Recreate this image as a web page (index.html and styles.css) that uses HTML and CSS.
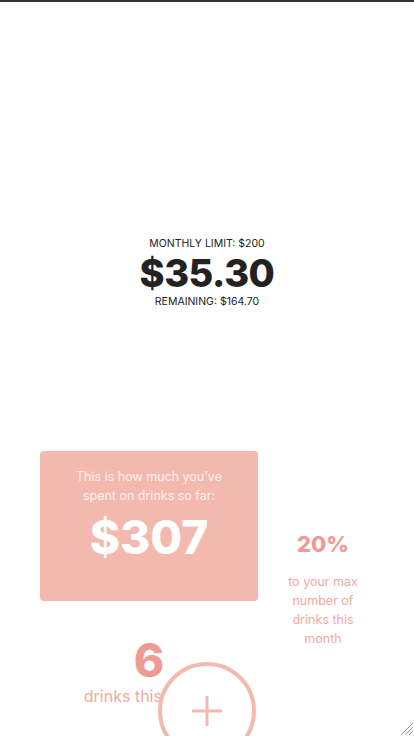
FILE: index.html
```html
<!DOCTYPE html>
<html>
<head>
<meta charset="utf-8">
<link rel="stylesheet" href="styles.css">
</head>
<body>
<div class="app">
  <section class="summary">
    <div class="limit">MONTHLY LIMIT: $200</div>
    <div class="spent">$35.30</div>
    <div class="remaining">REMAINING: $164.70</div>
  </section>
  <section class="stats">
    <div class="card">
      <p class="card-text">This is how much you’ve spent on drinks so far:</p>
      <div class="card-amount">$307</div>
    </div>
    <div class="side">
      <div class="pct">20%</div>
      <p class="side-text">to your max number of drinks this month</p>
    </div>
  </section>
  <section class="drinks">
    <div class="count">6</div>
    <div class="count-label">drinks this month</div>
  </section>
  <button class="add" aria-label="Add drink">
    <svg width="32" height="32" viewBox="0 0 32 32"><path d="M16 1v30M1 16h30" stroke="#f4b9ae" stroke-width="3" fill="none"/></svg>
  </button>
  <svg class="grip" width="16" height="16" viewBox="0 0 16 16"><path d="M15 3L3 15M15 7L7 15M15 11L11 15" stroke="#999" stroke-width="1" fill="none"/></svg>
</div>
</body>
</html>
```
FILE: styles.css
```css
html, body {
  margin: 0;
  padding: 0;
  background: #fff;
}
body {
  font-family: Inter, "Open Sans", sans-serif;
  border-top: 2px solid #333;
  height: 734px;
  overflow: hidden;
}
.app {
  position: relative;
  height: 734px;
}
.summary {
  height: 449px;
  display: flex;
  flex-direction: column;
  align-items: center;
  justify-content: center;
  color: #222;
  padding-top: 92px;
  box-sizing: border-box;
}
.limit, .remaining {
  font-size: 10.5px;
  line-height: 14px;
}
.spent {
  font-size: 38px;
  font-weight: 800;
  line-height: 44px;
  letter-spacing: -0.5px;
}
.stats {
  display: flex;
  align-items: flex-start;
  height: 150px;
  padding-left: 40px;
}
.card {
  width: 218px;
  height: 150px;
  background: #f4b9ae;
  border-radius: 4px;
  color: #fff;
  text-align: center;
  box-sizing: border-box;
  padding: 16px 30px 0;
}
.card-text {
  margin: 0;
  font-size: 12.5px;
  line-height: 19px;
  color: #fdf1ef;
}
.card-amount {
  font-size: 46px;
  font-weight: 800;
  line-height: 56px;
  margin-top: 4px;
}
.side {
  width: 130px;
  text-align: center;
  padding-top: 78px;
}
.pct {
  font-size: 22px;
  font-weight: 800;
  color: #ee9b93;
  line-height: 30px;
}
.side-text {
  margin: 13px auto 0;
  width: 90px;
  font-size: 12.5px;
  line-height: 19px;
  color: #f2a9a1;
}
.drinks {
  width: 218px;
  margin-left: 40px;
  text-align: center;
  padding-top: 34px;
}
.count {
  font-size: 46px;
  font-weight: 800;
  color: #ee9b93;
  line-height: 50px;
}
.count-label {
  font-size: 16px;
  color: #f2a9a1;
  white-space: nowrap;
  line-height: 22px;
}
.add {
  position: absolute;
  left: 158px;
  top: 660px;
  width: 98px;
  height: 98px;
  border-radius: 50%;
  border: 4px solid #f4b9ae;
  background: #fff;
  padding: 0;
  display: flex;
  align-items: center;
  justify-content: center;
}
.grip {
  position: absolute;
  right: 0;
  bottom: 0;
}
```
